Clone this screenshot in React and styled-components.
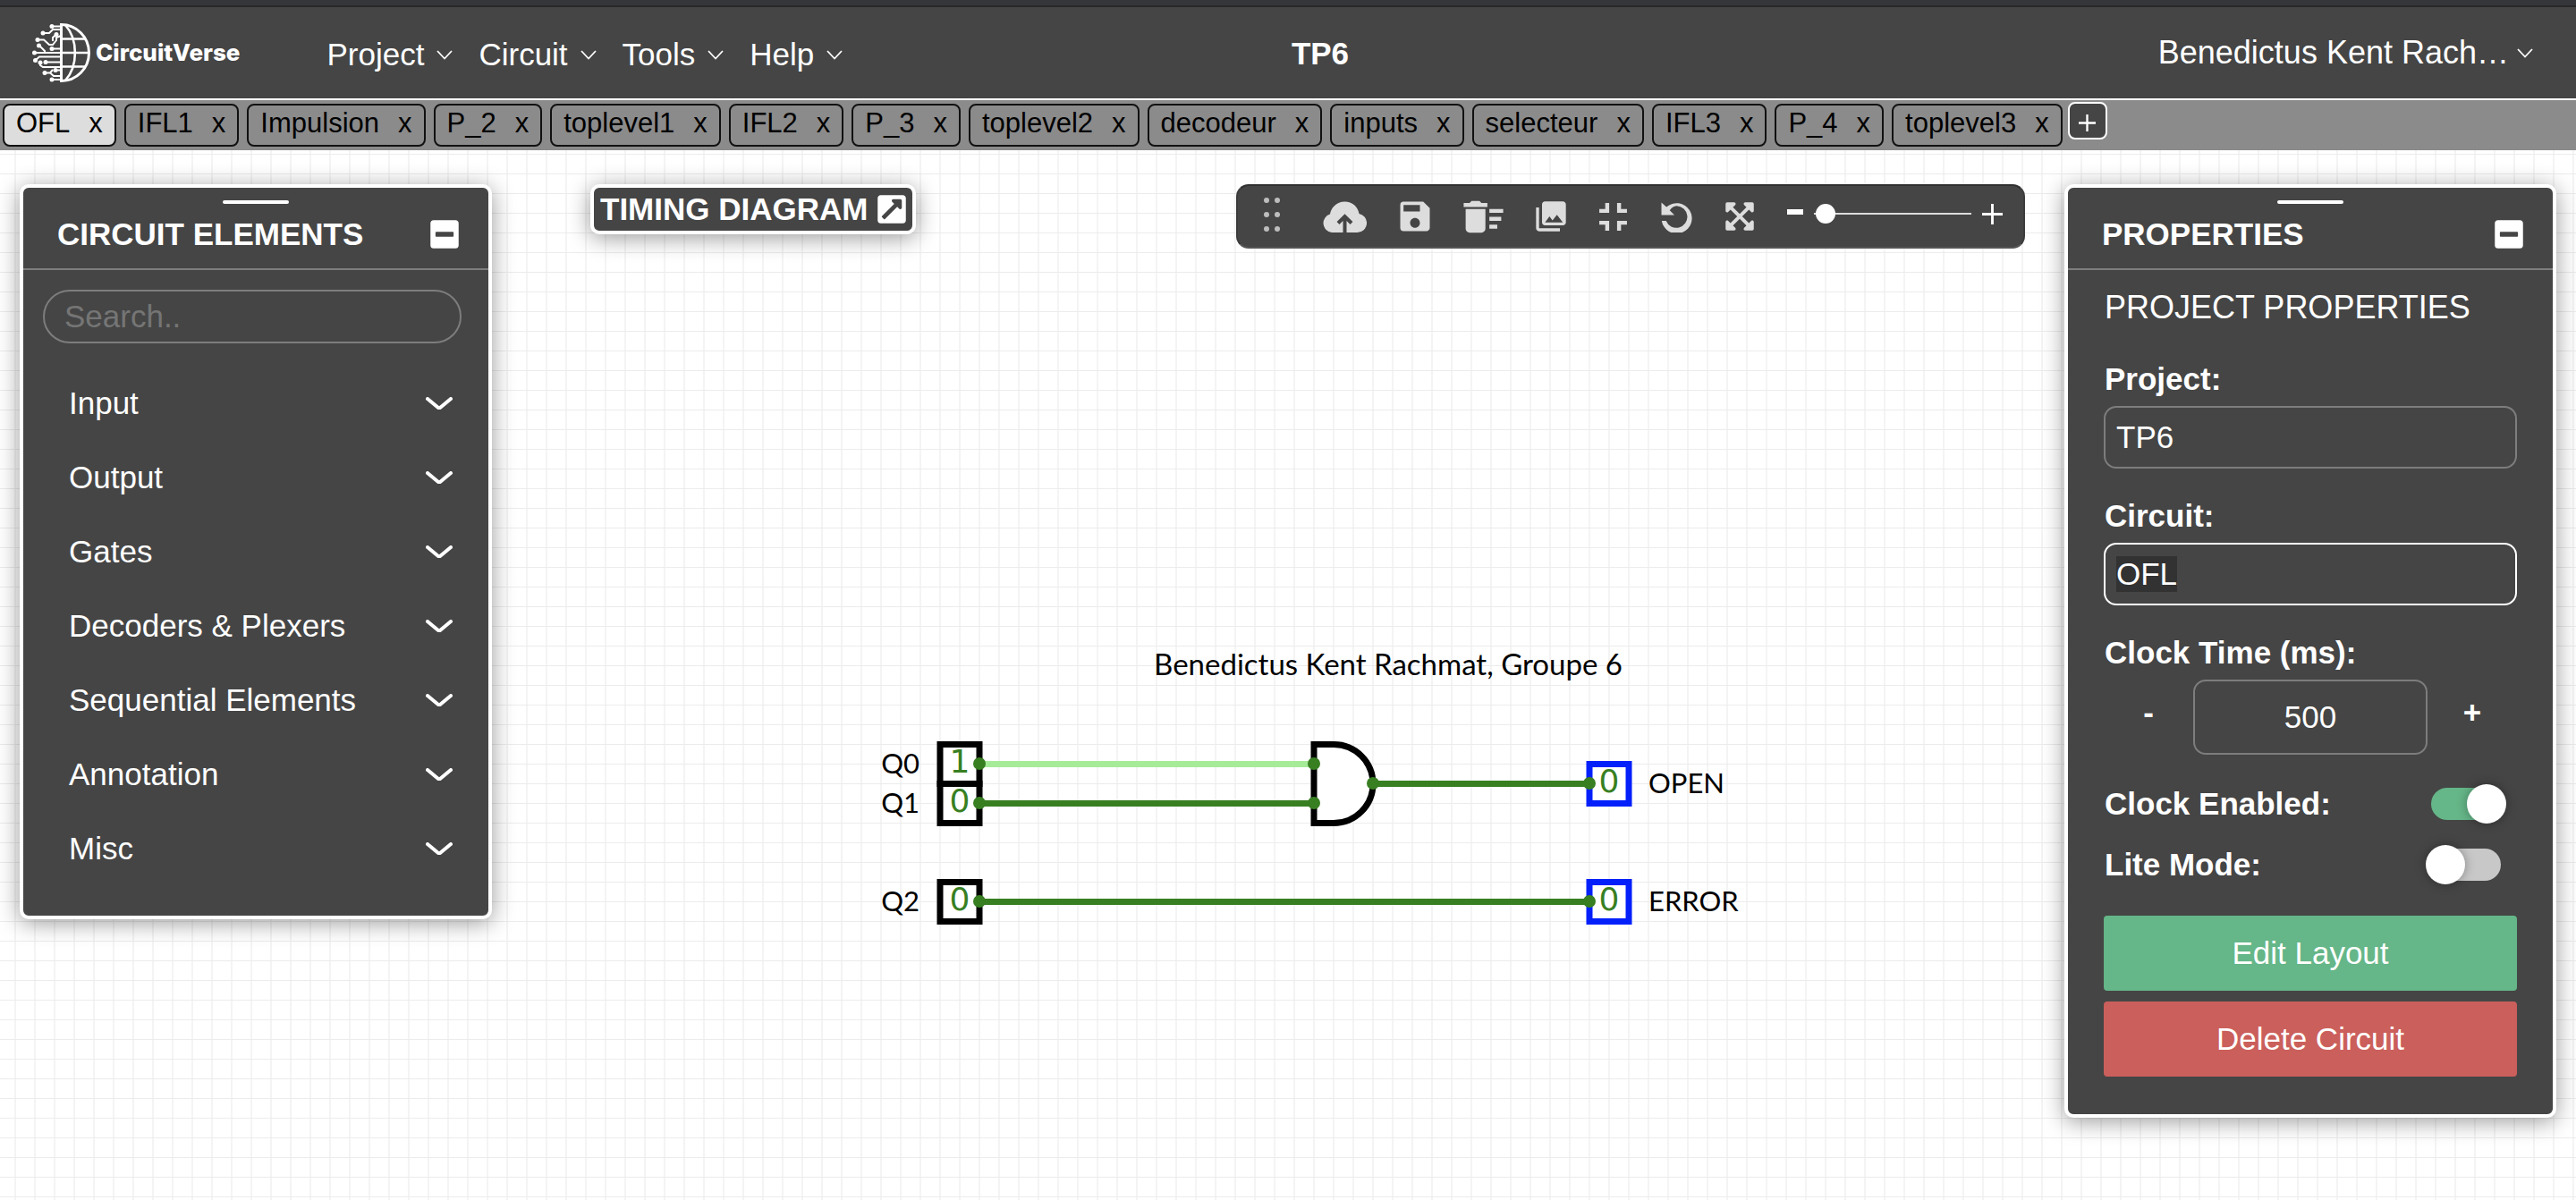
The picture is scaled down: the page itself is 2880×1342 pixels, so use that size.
import React, { useEffect, useRef, useState } from "react";
import styled, { createGlobalStyle, css } from "styled-components";
import { FaMinusSquare, FaExternalLinkSquareAlt, FaExpandArrowsAlt } from "react-icons/fa";
import { MdSave, MdDeleteSweep, MdPhotoLibrary, MdFullscreenExit } from "react-icons/md";

const color = {
  panel: "#454545",
  line: "#7d7d7d",
  tabs: "#8b8b8b",
  icon: "#dddddd",
  green: "#65b688",
  red: "#cb5f5b",
  wire: "#387f22",
  wireOn: "#a6eb98",
  output: "#0320fb",
};

const GlobalStyle = createGlobalStyle`
  *, *::before, *::after { box-sizing: border-box; }
  body { margin: 0; }
  body, button, input {
    font-family: "Liberation Sans", Arial, Helvetica, sans-serif;
    font-size: 35px;
    line-height: 40px;
  }
  button { margin: 0; padding: 0; border: 0; background: none; color: inherit; cursor: pointer; }
  ul { margin: 0; padding: 0; list-style: none; }
  h1, h2, h3 { margin: 0; }
  svg { display: block; flex: none; }
`;

const Page = styled.div`
  display: flex;
  flex-direction: column;
  min-height: 100vh;
  background: #fff;
`;

/* ---------- Header ---------- */

const WindowEdge = styled.div`
  height: 8px;
  background: #35363a;
  border-bottom: 2px solid #282828;
`;

const Header = styled.header`
  display: grid;
  grid-template-columns: 1fr auto 1fr;
  align-items: center;
  height: 104px;
  padding: 0 48px 0 36px;
  background: ${color.panel};
  border-bottom: 2px solid #fff;
  color: #fff;
`;

const HeaderStart = styled.div`
  display: flex;
  align-items: center;
  gap: 97px;
`;

const Brand = styled.a`
  display: flex;
  align-items: center;
  gap: 6px;
  color: #fff;
  text-decoration: none;
  font-family: Inter, sans-serif;
  font-size: 26px;
  font-weight: 800;
`;

const Nav = styled.nav`
  display: flex;
  gap: 29px;
  padding-top: 4px;
`;

const MenuButton = styled.button`
  display: flex;
  align-items: center;
  gap: 14px;
`;

const UserButton = styled(MenuButton)`
  gap: 9px;
  justify-self: end;
  font-size: 36px;
`;

const ProjectTitle = styled.h1`
  padding: 2px 0 0 84px;
  font-size: 35px;
  font-weight: 700;
`;

/* ---------- Tabs ---------- */

const TabBar = styled.div`
  display: flex;
  align-items: flex-start;
  gap: 6px;
  padding: 2px 3px 4px;
  background: ${color.tabs};
`;

const TabList = styled.ul`
  display: flex;
  gap: 9px;
  padding-top: 2px;
`;

const Tab = styled.li`
  display: flex;
  gap: 21px;
  height: 48px;
  padding: 0 13px 4px;
  border: 2px solid #111;
  border-radius: 8px;
  background: ${(p) => (p.$active ? "#dddddd" : "transparent")};

  button { font-size: 31px; color: #000; }
`;

const AddTab = styled.button`
  display: grid;
  place-items: center;
  width: 44px;
  height: 42px;
  padding-top: 4px;
  border: 2px solid #fff;
  border-radius: 8px;
  background: ${color.panel};
  color: #fff;
`;

/* ---------- Workspace ---------- */

const Workspace = styled.main`
  position: relative;
  flex: 1;
  display: flex;
  align-items: flex-start;
  padding: 38px 22px 92px;
  overflow: hidden;
  background-color: #fff;
  background-image:
    linear-gradient(#ececec 1px, transparent 1px),
    linear-gradient(90deg, #f4f4f4 2px, transparent 2px);
  background-size: 22px 22px;
  background-position: 16px 4px;
`;

const Diagram = styled.svg`
  position: absolute;
  left: 0;
  top: 0;
  width: 100%;
  height: 100%;
`;

const floating = css`
  position: relative;
  border: 4px solid #fff;
  border-radius: 10px;
  background: ${color.panel};
  color: #fff;
  box-shadow: 0 4px 26px rgba(0, 0, 0, 0.4);
`;

const Panel = styled.section`
  ${floating}
  flex: none;
  width: ${(p) => p.$width}px;
`;

const PanelHeader = styled.header`
  display: grid;
  grid-template-columns: 1fr auto;
  grid-template-rows: 4px 1fr;
  align-items: center;
  height: 92px;
  padding: 14px 31px 5px 38px;
  border-bottom: 2px solid ${color.line};

  &::before {
    content: "";
    grid-column: 1 / -1;
    justify-self: center;
    width: 74px;
    height: 4px;
    border-radius: 2px;
    background: #fff;
    margin-left: -7px;
  }
`;

const PanelTitle = styled.h2`
  font-size: 35px;
  font-weight: 700;
`;

const PanelToggle = styled.button`
  svg { width: 36px; height: 36px; }
`;

const SearchBox = styled.input`
  display: block;
  width: calc(100% - 52px);
  height: 60px;
  margin: 22px 30px 25px 22px;
  padding: 0 22px;
  border: 2px solid ${color.line};
  border-radius: 30px;
  outline: 0;
  background: transparent;
  color: #fff;

  &::placeholder { color: #757575; }
`;

const CategoryList = styled.ul`
  padding-bottom: 34px;
`;

const Category = styled.button`
  display: flex;
  align-items: center;
  justify-content: space-between;
  width: 100%;
  height: 83px;
  padding: 0 40px 0 51px;
`;

const TimingButton = styled.button`
  ${floating}
  display: flex;
  align-items: center;
  gap: 9px;
  margin-left: 110px;
  padding: 4px 5px 4px 7px;
  font-weight: 700;

  svg { width: 36px; height: 36px; }
`;

const Toolbar = styled.div`
  position: relative;
  display: flex;
  align-items: center;
  gap: 38px;
  height: 72px;
  margin: 0 44px 0 auto;
  padding: 0 23px 0 29px;
  border: 2px solid;
  border-color: #303030 #3c3c3c #555 #3c3c3c;
  border-radius: 14px;
  background: ${color.panel};
  color: ${color.icon};
`;

const Grip = styled.div`
  padding: 0 10px 4px 0;
`;

const ToolButton = styled.button`
  display: flex;
  align-items: center;
  justify-content: center;
  width: ${(p) => p.$width}px;

  svg { width: ${(p) => p.$icon}px; height: ${(p) => p.$icon}px; }
`;

const Zoom = styled.div`
  display: flex;
  align-items: center;
  gap: 12px;
  padding-bottom: 6px;
  color: #fff;
`;

const ZoomSlider = styled.input`
  appearance: none;
  width: 176px;
  height: 22px;
  margin: 0;
  background: transparent;

  &::-webkit-slider-runnable-track { height: 2px; background: ${color.icon}; }
  &::-webkit-slider-thumb {
    appearance: none;
    width: 22px;
    height: 22px;
    margin-top: -10px;
    border-radius: 50%;
    background: #fff;
  }
`;

/* ---------- Properties ---------- */

const PropertiesBody = styled.div`
  padding: 18px 40px 42px;
`;

const SectionTitle = styled.h3`
  margin-bottom: 36px;
  padding-left: 1px;
  font-size: 36px;
  font-weight: 400;
  line-height: 48px;
`;

const Field = styled.div`
  display: flex;
  flex-direction: column;
  gap: 10px;
  margin-bottom: 33px;
`;

const Label = styled.label`
  padding-left: 1px;
  font-weight: 700;
`;

const TextInput = styled.input`
  min-width: 0;
  width: 100%;
  height: ${(p) => (p.$tall ? 84 : 70)}px;
  padding: 0 12px;
  border: 2px solid ${color.line};
  border-radius: 14px;
  outline: 0;
  background: transparent;
  color: #fff;
  text-align: ${(p) => (p.$tall ? "center" : "left")};

  &:focus { border-color: #fff; }
  &::selection { background: #323232; color: #fff; }
`;

const Stepper = styled.div`
  display: grid;
  grid-template-columns: 100px 1fr 100px;
  align-items: center;
`;

const StepButton = styled.button`
  padding-bottom: 10px;
  font-weight: 700;
`;

const Switches = styled.div`
  display: grid;
  gap: 24px;
  margin-bottom: 35px;
`;

const SwitchRow = styled.div`
  display: flex;
  align-items: center;
  justify-content: space-between;
  height: 44px;
  padding-right: 18px;
`;

const Switch = styled.input`
  appearance: none;
  display: flex;
  align-items: center;
  width: 78px;
  height: 36px;
  margin: 0;
  border-radius: 18px;
  background: #c8c8c8;
  cursor: pointer;

  &::before {
    content: "";
    width: 44px;
    height: 44px;
    margin: 0 -6px;
    border-radius: 50%;
    background: #fff;
    box-shadow: 0 0 12px rgba(0, 0, 0, 0.35);
  }
  &:checked { justify-content: flex-end; background: ${color.green}; }
`;

const Actions = styled.div`
  display: grid;
  gap: 12px;
`;

const ActionButton = styled.button`
  height: 84px;
  border-radius: 4px;
  background: ${(p) => (p.$danger ? color.red : color.green)};
`;

/* ---------- Drawings ---------- */

const Logo = () => (
  <svg width="65" height="66" viewBox="0 0 65 66" fill="none" stroke="#fff" strokeWidth="2.6" aria-hidden="true">
    <path d="M32.5 1.5A31 31.5 0 0 1 32.5 64.5Z" strokeWidth="3" />
    <path d="M37 2C51.500 18 51.500 48 37 64M32.500 17.500H59.500M32.500 33H63M32.500 48.500H59.500" />
    <g strokeWidth="2">
      <path d="M22 3.500H32M12 11H19L23 7H32M6 18.500H13L19 24H23L27 19V16L32 14M22 28.500H32M8 25L14 31V33M2.500 33H32M3.500 41.500L8 37.500H32M9 44V47L12 49H32M15 43.500H32M14 55.500H20L23 52M20 55.500L24 59H32M22 63H32M27 12.500L23 16V20M26 52.500H32" />
    </g>
    <g fill="#fff" stroke="none">
      {[[22, 3.5], [12, 11], [6, 18.5], [7.5, 25], [2.5, 33], [3.5, 41.5], [15, 43.5], [14, 55.5], [22, 63], [22, 28.5], [27, 12.5], [26, 52.5], [9, 44]].map(([x, y]) => (
        <circle key={`${x}-${y}`} cx={x} cy={y} r="2.500" />
      ))}
    </g>
  </svg>
);

const ThinChevron = () => (
  <svg width="18" height="11" viewBox="0 0 18 11" fill="none" stroke="currentColor" strokeWidth="1.800" aria-hidden="true">
    <path d="M1 1L9 9.500L17 1" />
  </svg>
);

const BoldChevron = () => (
  <svg width="30" height="14" viewBox="0 0 30 14" fill="none" stroke="currentColor" strokeWidth="4" strokeLinecap="round" aria-hidden="true">
    <path d="M2 2L14 12M28 2L16 12" />
  </svg>
);

const Cross = ({ size, stroke }) => (
  <svg width={size} height={size} viewBox="0 0 24 24" stroke="currentColor" strokeWidth={stroke} aria-hidden="true">
    <path d="M12 0V24M0 12H24" />
  </svg>
);

const CloudIcon = () => (
  <svg viewBox="0 0 49 49" aria-hidden="true">
    <path d="M10 42A10.500 10.500 0 0 1 8 21.500A16.500 16.500 0 0 1 24.500 7.500C33 7.500 39 13 40.500 21A10.600 10.600 0 0 1 38.500 42Z" fill="currentColor" />
    <path d="M24.500 43V25M17 31.500L24.500 24L32 31.500" fill="none" stroke={color.panel} strokeWidth="4" />
  </svg>
);

const UndoIcon = () => (
  <svg viewBox="0 0 34 35" fill="currentColor" aria-hidden="true">
    <path d="M0 1.500V15.500H14.500L9.300 10.200A10.500 12 0 0 1 17 5.200A12.300 12.300 0 1 1 5.200 22H0.300A17 17 0 1 0 5.600 6.600Z" />
  </svg>
);

const Dots = () => (
  <svg width="18" height="38" viewBox="0 0 18 38" fill="#bdbdbd" aria-hidden="true">
    {[3, 19, 35].map((y) => (
      <g key={y}>
        <circle cx="3" cy={y} r="3" />
        <circle cx="15" cy={y} r="3" />
      </g>
    ))}
  </svg>
);

const bits = [
  { label: "Q0", value: 1, x: 1051, y: 664 },
  { label: "Q1", value: 0, x: 1051, y: 708 },
  { label: "Q2", value: 0, x: 1051, y: 818 },
  { label: "OPEN", value: 0, x: 1777, y: 686, out: true },
  { label: "ERROR", value: 0, x: 1777, y: 818, out: true },
];

const wires = [
  { from: 1095, to: 1469, y: 686, on: true },
  { from: 1095, to: 1469, y: 730 },
  { from: 1535, to: 1777, y: 708 },
  { from: 1095, to: 1777, y: 840 },
];

const Circuit = () => (
  <Diagram role="img" aria-label="OFL circuit">
    <text x="1552" y="587" textAnchor="middle" fontFamily="Lato, sans-serif" fontSize="33">
      Benedictus Kent Rachmat, Groupe 6
    </text>
    {bits.map((b) => (
      <rect key={b.label} x={b.x} y={b.y + 0.5} width="44" height="44" fill="#fff" stroke={b.out ? color.output : "#000"} strokeWidth="7" />
    ))}
    <path d="M1469 664.5H1491A44 44 0 0 1 1491 752.5H1469Z" fill="#fff" stroke="#000" strokeWidth="7" />
    {wires.map((w) => (
      <path key={`${w.from}-${w.y}`} d={`M${w.from} ${w.y + 0.5}H${w.to}`} stroke={w.on ? color.wireOn : color.wire} strokeWidth="7" />
    ))}
    {wires.flatMap((w) => [w.from, w.to].map((x) => (
      <circle key={`${x}-${w.y}`} cx={x} cy={w.y} r="7" fill={color.wire} />
    )))}
    {bits.map((b) => (
      <g key={b.label}>
        <text x={b.x + 22} y={b.y + 32} textAnchor="middle" fill={color.wire} fontFamily="DejaVu Sans, sans-serif" fontSize="36">
          {b.value}
        </text>
        <text x={b.out ? b.x + 66 : b.x - 23} y={b.y + 33} textAnchor={b.out ? "start" : "end"} fontFamily="Lato, sans-serif" fontSize="31">
          {b.label}
        </text>
      </g>
    ))}
  </Diagram>
);

/* ---------- App ---------- */

const menus = ["Project", "Circuit", "Tools", "Help"];
const tabs = ["OFL", "IFL1", "Impulsion", "P_2", "toplevel1", "IFL2", "P_3", "toplevel2", "decodeur", "inputs", "selecteur", "IFL3", "P_4", "toplevel3"];
const categories = ["Input", "Output", "Gates", "Decoders & Plexers", "Sequential Elements", "Annotation", "Misc"];
const tools = [
  { name: "Save online", width: 48, icon: 49, Icon: CloudIcon },
  { name: "Save offline", width: 33, icon: 44, Icon: MdSave },
  { name: "Delete selected", width: 44, icon: 53, Icon: MdDeleteSweep },
  { name: "Download as image", width: 32, icon: 40, Icon: MdPhotoLibrary },
  { name: "Fit to screen", width: 31, icon: 53, Icon: MdFullscreenExit },
  { name: "Undo", width: 34, icon: 35, Icon: UndoIcon },
  { name: "Preview circuit", width: 31, icon: 36, Icon: FaExpandArrowsAlt },
];

export default function App() {
  const circuitInput = useRef(null);
  const [clock, setClock] = useState(500);

  useEffect(() => {
    circuitInput.current.focus();
    circuitInput.current.select();
  }, []);

  return (
    <Page>
      <GlobalStyle />
      <WindowEdge />
      <Header>
        <HeaderStart>
          <Brand href="#home">
            <Logo />
            CircuitVerse
          </Brand>
          <Nav>
            {menus.map((m) => (
              <MenuButton key={m}>
                {m}
                <ThinChevron />
              </MenuButton>
            ))}
          </Nav>
        </HeaderStart>
        <ProjectTitle>TP6</ProjectTitle>
        <UserButton>
          Benedictus Kent Rach…
          <ThinChevron />
        </UserButton>
      </Header>

      <TabBar>
        <TabList>
          {tabs.map((t, i) => (
            <Tab key={t} $active={i === 0}>
              <button>{t}</button>
              <button aria-label={`Close ${t}`}>x</button>
            </Tab>
          ))}
        </TabList>
        <AddTab aria-label="New circuit">
          <Cross size={19} stroke={3} />
        </AddTab>
      </TabBar>

      <Workspace>
        <Circuit />

        <Panel $width={528}>
          <PanelHeader>
            <PanelTitle>CIRCUIT ELEMENTS</PanelTitle>
            <PanelToggle aria-label="Minimize circuit elements">
              <FaMinusSquare />
            </PanelToggle>
          </PanelHeader>
          <SearchBox type="text" placeholder="Search.." aria-label="Search elements" />
          <CategoryList>
            {categories.map((c) => (
              <li key={c}>
                <Category>
                  {c}
                  <BoldChevron />
                </Category>
              </li>
            ))}
          </CategoryList>
        </Panel>

        <TimingButton>
          TIMING DIAGRAM
          <FaExternalLinkSquareAlt />
        </TimingButton>

        <Toolbar>
          <Grip>
            <Dots />
          </Grip>
          {tools.map(({ name, width, icon, Icon }) => (
            <ToolButton key={name} aria-label={name} $width={width} $icon={icon}>
              <Icon />
            </ToolButton>
          ))}
          <Zoom>
            <button aria-label="Zoom out">
              <svg width="18" height="10" viewBox="0 0 18 10" fill="currentColor" aria-hidden="true">
                <path d="M0 0H18V6H0Z" />
              </svg>
            </button>
            <ZoomSlider type="range" min="0" max="100" defaultValue="1" aria-label="Zoom" />
            <button aria-label="Zoom in">
              <Cross size={23} stroke={3} />
            </button>
          </Zoom>
        </Toolbar>

        <Panel $width={550}>
          <PanelHeader>
            <PanelTitle>PROPERTIES</PanelTitle>
            <PanelToggle aria-label="Minimize properties">
              <FaMinusSquare />
            </PanelToggle>
          </PanelHeader>
          <PropertiesBody>
            <SectionTitle>PROJECT PROPERTIES</SectionTitle>
            <Field>
              <Label htmlFor="project">Project:</Label>
              <TextInput id="project" type="text" defaultValue="TP6" />
            </Field>
            <Field>
              <Label htmlFor="circuit">Circuit:</Label>
              <TextInput id="circuit" type="text" defaultValue="OFL" ref={circuitInput} />
            </Field>
            <Field>
              <Label htmlFor="clock">Clock Time (ms):</Label>
              <Stepper>
                <StepButton aria-label="Decrease" onClick={() => setClock(clock - 10)}>-</StepButton>
                <TextInput id="clock" type="text" inputMode="numeric" $tall value={clock} onChange={(e) => setClock(Number(e.target.value) || 0)} />
                <StepButton aria-label="Increase" onClick={() => setClock(clock + 10)}>+</StepButton>
              </Stepper>
            </Field>
            <Switches>
              <SwitchRow>
                <Label htmlFor="clock-enabled">Clock Enabled:</Label>
                <Switch id="clock-enabled" type="checkbox" defaultChecked />
              </SwitchRow>
              <SwitchRow>
                <Label htmlFor="lite-mode">Lite Mode:</Label>
                <Switch id="lite-mode" type="checkbox" />
              </SwitchRow>
            </Switches>
            <Actions>
              <ActionButton>Edit Layout</ActionButton>
              <ActionButton $danger>Delete Circuit</ActionButton>
            </Actions>
          </PropertiesBody>
        </Panel>
      </Workspace>
    </Page>
  );
}
